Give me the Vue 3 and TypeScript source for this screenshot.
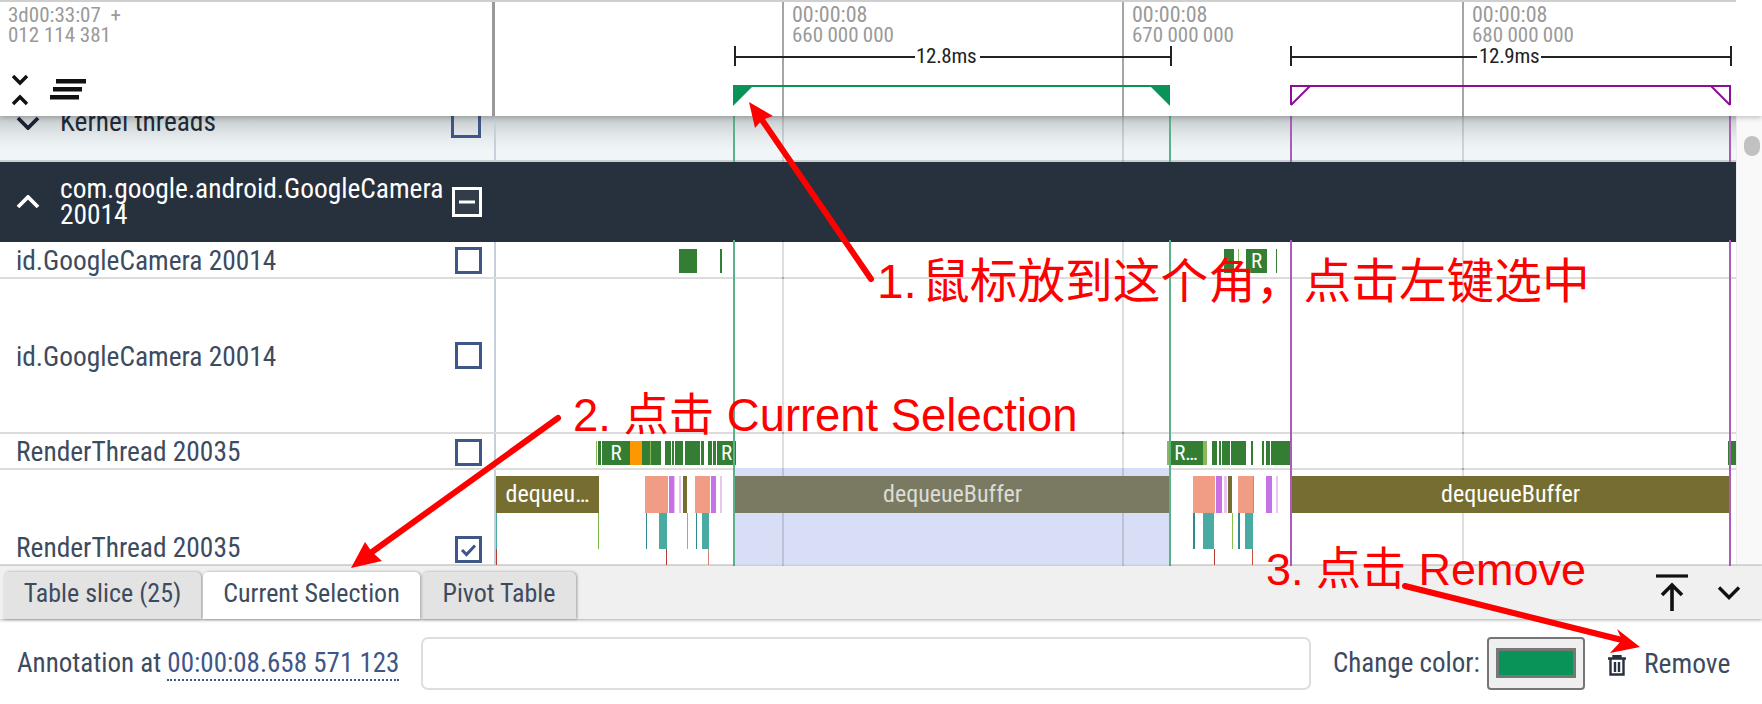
<script setup lang="ts">
interface Box { x: number; e: number; c: string; t?: string; y?: number; h?: number; fg?: string }
const HEAD = 495
const ORIGIN = 496
const gridX = [782, 1122, 1462]
const G = '#347e33', L = '#8bb85a', O = '#ff9800'
const S = '#f19c85', P = '#c472e6', Q = '#e8c5f2', B = '#766e30', T = '#4aaba3'

const place = (b: Box) => ({
  left: `${b.x - ORIGIN}px`,
  width: `${b.e - b.x}px`,
  background: b.c,
  color: b.fg,
  top: b.y === undefined ? undefined : `${b.y}px`,
  height: b.h === undefined ? undefined : `${b.h}px`,
})

const row1: Box[] = [
  { x: 679, e: 697, c: G }, { x: 720, e: 722, c: G }, { x: 1224, e: 1234, c: G },
  { x: 1238, e: 1239, c: L }, { x: 1246, e: 1267, c: G, t: 'R' }, { x: 1276, e: 1277, c: G },
]
const row3: Box[] = [
  { x: 596, e: 597, c: L }, { x: 598, e: 601, c: G }, { x: 602, e: 630, c: G, t: 'R' },
  { x: 630, e: 642, c: O }, { x: 642, e: 650, c: G }, { x: 650, e: 651, c: L }, { x: 651, e: 661, c: G },
  { x: 665, e: 671, c: G }, { x: 672, e: 674, c: G }, { x: 675, e: 683, c: G }, { x: 685, e: 700, c: G },
  { x: 701, e: 704, c: G }, { x: 708, e: 712, c: G }, { x: 713, e: 716, c: G }, { x: 717, e: 736, c: G, t: 'R' },
  { x: 1167, e: 1169, c: L }, { x: 1169, e: 1203, c: G, t: 'R…' }, { x: 1203, e: 1207, c: L },
  { x: 1212, e: 1217, c: G }, { x: 1219, e: 1221, c: G }, { x: 1222, e: 1230, c: G }, { x: 1231, e: 1246, c: G },
  { x: 1251, e: 1253, c: G }, { x: 1262, e: 1264, c: G }, { x: 1266, e: 1270, c: G }, { x: 1271, e: 1291, c: G },
  { x: 1728, e: 1736, c: G },
]
const sl = (x: number, e: number, c: string, t?: string, fg?: string): Box => ({ x, e, c, t, fg, y: 6, h: 37 })
const mid = (x: number, e: number, c: string): Box => ({ x, e, c, y: 43, h: 36 })
const low = (x: number, c: string): Box => ({ x, e: x + 1, c, y: 79, h: 16 })
const row4: Box[] = [
  sl(496, 599, B, 'dequeu…'),
  sl(645, 668, S), sl(669, 674, P), sl(674, 675, Q), sl(679, 681, Q), sl(683, 687, B),
  sl(695, 710, S), sl(711, 716, P), sl(720, 722, Q),
  sl(735, 1170, '#7a7a62', 'dequeueBuffer', '#dcdcd6'),
  sl(1193, 1215, S), sl(1216, 1222, P), sl(1224, 1227, Q), sl(1228, 1232, B),
  sl(1238, 1253, S), sl(1253, 1254, P), sl(1266, 1272, P), sl(1276, 1278, Q),
  sl(1291, 1730, B, 'dequeueBuffer'),
  mid(496, 497, T), mid(598, 599, '#7cb342'), mid(646, 647, '#2f8a8f'), mid(659, 667, T),
  mid(687, 688, '#8bc34a'), mid(696, 697, '#2f8a8f'), mid(702, 709, T), mid(1193, 1195, '#2f8a8f'),
  mid(1203, 1214, T), mid(1232, 1233, '#8bc34a'), mid(1238, 1240, '#2f8a8f'), mid(1245, 1253, T),
  low(496, '#b23b2e'), low(666, '#b23b2e'), low(708, '#d08478'), low(1214, '#b23b2e'), low(1252, '#c9503f'),
]

const rows = [
  { name: 'id.GoogleCamera 20014', h: 37, boxes: row1, checked: false, cls: 'thin' },
  { name: 'id.GoogleCamera 20014', h: 155, boxes: [] as Box[], checked: false, cls: '' },
  { name: 'RenderThread 20035', h: 36, boxes: row3, checked: false, cls: 'thin' },
  { name: 'RenderThread 20035', h: 95, boxes: row4, checked: true, cls: 'last' },
]
const tabs = [
  { label: 'Table slice (25)', active: false },
  { label: 'Current Selection', active: true },
  { label: 'Pivot Table', active: false },
]
const times = [
  { x: 792, ns: '660 000 000' },
  { x: 1132, ns: '670 000 000' },
  { x: 1472, ns: '680 000 000' },
]
</script>

<template>
  <div class="page">
    <header class="header">
      <div class="head-left">
        <div class="origin"><span>3d00:33:07 &nbsp;+</span><span>012 114 381</span></div>
        <div class="head-tools">
          <svg class="expand" width="20" height="34" viewBox="0 0 20 34">
            <path d="M3 3l7 7 7-7M3 31l7-7 7 7" fill="none" stroke="#111" stroke-width="3.4" />
          </svg>
          <svg class="stack" width="38" height="22" viewBox="0 0 38 22">
            <path d="M7 0h30v4.500H7zM4 8h29v4.500H4zM1 16h29v4.500H1z" fill="#111" />
          </svg>
        </div>
      </div>
      <div class="head-time">
        <span v-for="g in gridX" :key="g" class="hgrid" :style="{ left: `${g - HEAD}px` }"></span>
        <div v-for="t in times" :key="t.x" class="time" :style="{ left: `${t.x - HEAD}px` }">
          <span>00:00:08</span><span class="ns">{{ t.ns }}</span>
        </div>
        <svg class="marks" width="1267" height="114" viewBox="495 2 1267 114">
          <g fill="none" stroke="#222" stroke-width="2">
            <path d="M735 46v20M735 57h180M980 57h191M1171 46v20" />
            <path d="M1291 46v20M1291 57h186M1541 57h190M1731 46v20" />
          </g>
          <path d="M733 87V85h437v2z" fill="#0a9358" />
          <path d="M733 85h21l-21 21zM1170 85h-21l21 21z" fill="#0a9358" />
          <path d="M1291 105V86h439v19M1291 105l19-19M1730 105l-19-19" fill="none" stroke="#8b0e96" stroke-width="2" />
        </svg>
        <span class="span-label a">12.8ms</span>
        <span class="span-label b">12.9ms</span>
      </div>
    </header>

    <main class="tracks">
      <div class="scroll-col">
        <section class="row kernel">
          <div class="shell">
            <svg class="chev" width="24" height="14" viewBox="0 0 24 14"><path d="M2 2l10 10 10-10" fill="none" stroke="#1a2330" stroke-width="3.800" /></svg>
            <span class="name kname">Kernel threads</span>
            <svg class="check kcheck" width="30" height="30" viewBox="0 0 30 30"><rect x="1.500" y="1.500" width="27" height="27" fill="none" stroke="#3f5688" stroke-width="3" /></svg>
          </div>
          <div class="track">
            <span v-for="g in gridX" :key="g" class="grid" :style="{ left: `${g - ORIGIN}px` }"></span>
            <span class="vline green"></span><span class="vline green end"></span>
            <span class="vline purple"></span><span class="vline purple end"></span>
          </div>
        </section>

        <section class="row process">
          <div class="shell">
            <svg class="chev" width="24" height="14" viewBox="0 0 24 14"><path d="M2 12l10-10 10 10" fill="none" stroke="#fff" stroke-width="3.800" /></svg>
            <span class="name pname">com.google.android.GoogleCamera 20014</span>
            <svg class="check" width="30" height="30" viewBox="0 0 30 30">
              <rect x="1.500" y="1.500" width="27" height="27" fill="#333d4a" stroke="#fff" stroke-width="3" />
              <path d="M7 15h16" stroke="#fff" stroke-width="3" />
            </svg>
          </div>
          <div class="track"></div>
        </section>

        <section v-for="(r, i) in rows" :key="i" class="row" :class="r.cls" :style="{ height: `${r.h}px` }">
          <div class="shell">
            <span class="name tname">{{ r.name }}</span>
            <svg class="check" width="27" height="27" viewBox="0 0 27 27">
              <rect x="1.500" y="1.500" width="24" height="24" fill="none" stroke="#3f5688" stroke-width="3" />
              <path v-if="r.checked" d="M7 14l4.500 4.500L20 9.500" fill="none" stroke="#3f5688" stroke-width="3" />
            </svg>
          </div>
          <div class="track">
            <div v-if="r.cls === 'last'" class="selection"></div>
            <span v-for="g in gridX" :key="g" class="grid" :style="{ left: `${g - ORIGIN}px` }"></span>
            <div v-for="(b, j) in r.boxes" :key="j" class="box" :style="place(b)">{{ b.t }}</div>
            <span class="vline green"></span><span class="vline green end"></span>
            <span class="vline purple"></span><span class="vline purple end"></span>
          </div>
        </section>
      </div>
      <aside class="gutter"><span class="thumb"></span></aside>
    </main>

    <section class="panel">
      <div class="tabbar">
        <div class="tabs">
          <button v-for="t in tabs" :key="t.label" class="tab" :class="{ active: t.active }">{{ t.label }}</button>
        </div>
        <div class="bar-icons">
          <svg width="34" height="38" viewBox="0 0 34 38">
            <path d="M1 2h32" stroke="#111" stroke-width="3.200" />
            <path d="M17 37V12M7 21l10-10 10 10" fill="none" stroke="#111" stroke-width="3.600" />
          </svg>
          <svg width="24" height="16" viewBox="0 0 24 16"><path d="M2 2.500l10 10 10-10" fill="none" stroke="#111" stroke-width="3.400" /></svg>
        </div>
      </div>
      <div class="details">
        <span class="anno">Annotation at <a class="stamp">00:00:08.658 571 123</a></span>
        <input class="note" type="text" />
        <span class="chg">Change color:</span>
        <span class="swatch"><i></i></span>
        <button class="remove">
          <svg class="trash" width="18" height="21" viewBox="0 0 18 21">
            <path d="M0 3.500h18M5.500 3V1h7v2M2.500 4v15.500h13V4M7 7v10M11 7v10" fill="none" stroke="#263040" stroke-width="2.400" />
          </svg>
          Remove
        </button>
      </div>
    </section>

    <div class="note-text n1">1. 鼠标放到这个角，点击左键选中</div>
    <div class="note-text n2">2. 点击 Current Selection</div>
    <div class="note-text n3">3. 点击 Remove</div>
    <svg class="arrows" width="1762" height="704" viewBox="0 0 1762 704">
      <g stroke="#ff0000" stroke-width="6" stroke-linecap="round" fill="none">
        <path d="M871 279L762 120" />
        <path d="M558 418L372 552" />
        <path d="M1405 586L1622 640" />
      </g>
      <path d="M749 102L773 116L762 120L755 128Z" fill="#ff0000" />
      <path d="M351 568L365 542L372 552L382 561Z" fill="#ff0000" />
      <path d="M1640 647L1617 629L1622 640L1610 653Z" fill="#ff0000" />
    </svg>
  </div>
</template>

<style>
html, body { margin: 0; background: #fff; overflow: hidden; }
</style>

<style scoped>
.page {
  position: relative;
  width: 1762px;
  height: 704px;
  overflow: hidden;
  font-family: Roboto, "Noto Sans", sans-serif;
  font-stretch: 75%;
  color: #3d4b5f;
  display: flex;
  flex-direction: column;
}
.header {
  position: relative;
  z-index: 3;
  flex: none;
  height: 116px;
  box-sizing: border-box;
  padding-top: 2px;
  display: flex;
  background: #fff;
  box-shadow: 0 1px 6px rgba(0, 0, 0, 0.28);
}
.header::before {
  content: "";
  position: absolute;
  left: 0;
  top: 0;
  width: 1736px;
  height: 2px;
  background: #cfcfcf;
}
.head-left {
  width: 492px;
  flex: none;
  border-right: 3px solid #999;
  display: flex;
  flex-direction: column;
  justify-content: space-between;
}
.origin {
  display: flex;
  flex-direction: column;
  padding: 3px 0 0 8px;
  font-size: 21px;
  line-height: 20px;
  color: #9a9a9a;
}
.head-tools { display: flex; align-items: center; gap: 19px; padding: 0 0 9px 10px; }
.head-time { position: relative; flex: 1; }
.hgrid { position: absolute; top: 0; bottom: 0; width: 2px; background: #a5a5a5; }
.time {
  position: absolute;
  top: 3px;
  display: flex;
  flex-direction: column;
  font-size: 22px;
  line-height: 20px;
  color: #9a9a9a;
  white-space: nowrap;
}
.ns { font-size: 21px; word-spacing: -0.5px; }
.marks { position: absolute; left: 0; top: 0; }
.span-label { position: absolute; top: 42px; font-size: 21px; line-height: 24px; letter-spacing: -0.3px; color: #222; }
.span-label.a { left: 421px; }
.span-label.b { left: 984px; }
.tracks { flex: none; height: 448px; display: flex; }
.scroll-col { width: 1736px; flex: none; display: flex; flex-direction: column; }
.gutter {
  flex: 1;
  position: relative;
  background: #f9f9f9;
  border-left: 1px solid #ececec;
}
.thumb {
  position: absolute;
  left: 7px;
  top: 20px;
  width: 16px;
  height: 20px;
  border-radius: 8px;
  background: #c1c1c1;
}
.row { flex: none; display: flex; box-sizing: border-box; background: #fff; border-bottom: 2px solid #dcdcdc; }
.row.last { border-bottom: 0; }
.shell {
  position: relative;
  flex: none;
  width: 494px;
  display: flex;
  align-items: center;
  box-sizing: border-box;
}
.track { position: relative; flex: 1; border-left: 2px solid #c5d0da; }
.kernel { height: 46px; background: linear-gradient(#c4c9cc, #e6ebee 22px, #f0f5f8 34px); border-bottom-color: #c9cfd2; }
.kernel .shell { align-items: flex-start; }
.chev { flex: none; margin-left: 16px; }
.name { white-space: nowrap; font-size: 27.4px; }
.kname { position: absolute; left: 60px; top: -9px; line-height: 30px; color: #1f2937; }
.kcheck { position: absolute; left: 451px; top: -8px; }
.process { height: 80px; background: #27303d; border-bottom: 0; }
.process .track { border-left: 0; }
.pname {
  position: absolute;
  left: 60px;
  top: 14px;
  width: 392px;
  white-space: normal;
  line-height: 26px;
  color: #fff;
}
.tname { padding-left: 16px; line-height: 30px; margin-top: 2px; }
.shell > .check { position: absolute; }
.row .shell > .check:not(.kcheck) { left: 455px; }
.process .shell > .check:not(.kcheck) { left: 452px; top: 25px; }
.thin .shell > .check { top: 5px; }
.last .shell > .check { top: 66px; }
.last .tname { margin-top: 60px; }
.grid { position: absolute; top: -2px; bottom: -2px; width: 2px; background: rgba(0, 0, 0, 0.13); }
.vline { position: absolute; top: -2px; bottom: -2px; width: 2px; }
.vline.green { left: 237px; background: #5bb18a; }
.vline.green.end { left: 673px; }
.vline.purple { left: 794px; background: #ab5cb8; }
.vline.purple.end { left: 1233px; }
.selection { position: absolute; left: 238px; width: 436px; top: -2px; bottom: 0; background: #d9def7; }
.box {
  position: absolute;
  top: 7px;
  height: 24px;
  overflow: hidden;
  color: #fff;
  text-align: center;
  font-size: 21px;
  line-height: 24px;
  white-space: nowrap;
}
.last .box { line-height: 37px; font-size: 24px; }
.panel { flex: 1; display: flex; flex-direction: column; border-top: 2px solid #dcdcdc; }
.tabbar {
  flex: none;
  height: 53px;
  background: #f0f0f0;
  display: flex;
  justify-content: space-between;
  align-items: flex-end;
  box-shadow: 0 1px 3px rgba(0, 0, 0, 0.35);
  position: relative;
  padding-left: 4px;
}
.tabs { display: flex; gap: 2px; align-self: flex-end; }
.tab {
  height: 47px;
  border: 0;
  border-radius: 5px 5px 0 0;
  background: #e3e3e3;
  box-shadow: 1px 0 3px rgba(0, 0, 0, 0.35);
  color: #3d4b5f;
  font: inherit;
  font-size: 26px;
  padding: 0 0 6px;
  white-space: nowrap;
}
.tab:nth-child(1) { width: 197px; }
.tab:nth-child(2) { width: 217px; }
.tab:nth-child(3) { width: 154px; }
.tab.active { background: #fff; position: relative; z-index: 1; }
.bar-icons { display: flex; align-items: center; gap: 28px; padding: 0 21px 7px 0; }
.details {
  flex: 1;
  background: #fff;
  display: flex;
  align-items: center;
  padding: 3px 0 0 17px;
  box-sizing: border-box;
}
.anno { font-size: 27px; white-space: nowrap; width: 404px; flex: none; }
.stamp { color: #3f5688; border-bottom: 2px dotted #3f5688; }
.note {
  width: 890px;
  flex: none;
  height: 53px;
  box-sizing: border-box;
  border: 2px solid #dedede;
  border-radius: 7px;
  background: #fff;
  outline: none;
}
.chg { margin-left: 22px; font-size: 27px; white-space: nowrap; width: 154px; flex: none; }
.swatch {
  width: 98px;
  height: 53px;
  flex: none;
  box-sizing: border-box;
  border: 2px solid #767676;
  border-radius: 4px;
  background: #efefef;
  display: flex;
  align-items: center;
  justify-content: center;
}
.swatch i { display: block; width: 80px; height: 30px; box-sizing: border-box; background: #0a9358; border: 3px solid #767676; }
.remove {
  margin-left: 23px;
  display: flex;
  align-items: center;
  gap: 18px;
  border: 0;
  padding: 0;
  background: none;
  font: inherit;
  font-size: 27.5px;
  color: #3d4b5f;
}
.trash { margin-top: 5px; }
.note-text {
  position: absolute;
  z-index: 5;
  color: #ff0000;
  font-family: "Liberation Sans", "Noto Sans CJK SC", sans-serif;
  font-stretch: normal;
  font-size: 45px;
  line-height: 52px;
  white-space: nowrap;
}
.n1 { left: 877px; top: 256px; font-size: 47.7px; word-spacing: -8px; }
.n2 { left: 573px; top: 390px; font-size: 45.4px; }
.n3 { left: 1266px; top: 544px; }
.arrows { position: absolute; left: 0; top: 0; z-index: 6; pointer-events: none; }
</style>
